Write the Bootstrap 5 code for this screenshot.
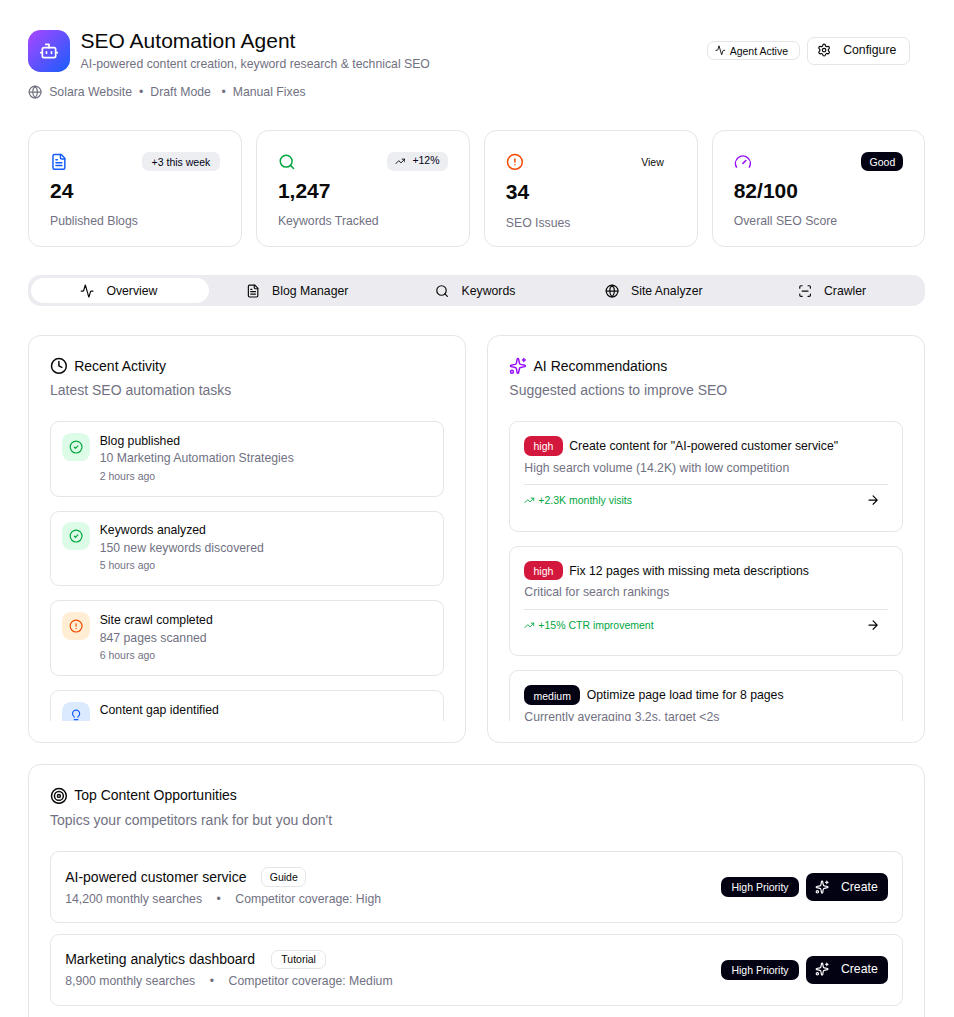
<!DOCTYPE html>
<html lang="en">
<head>
<meta charset="utf-8">
<meta name="viewport" content="width=device-width, initial-scale=1">
<title>SEO Automation Agent</title>
<link href="https://cdn.jsdelivr.net/npm/bootstrap@5.3.0/dist/css/bootstrap.min.css" rel="stylesheet">
<style>
:root{--ink:#0a0a0a;--dim:#717182;--line:#e5e5e5;--navy:#030213}
body{font-family:"Liberation Sans",Arial,sans-serif;font-size:12.26px;line-height:18px;color:var(--ink);background:#fff;overflow:hidden;height:1017px}
.page{padding:29.5px 28.6px 0 28px;height:1017px;overflow:hidden}
svg.ic{display:block;flex:none;width:14.2px;height:14.2px;fill:none;stroke:currentColor;stroke-width:2;stroke-linecap:round;stroke-linejoin:round}
svg.ic-lg{width:17.8px;height:17.8px}
svg.ic-sm{width:10.7px;height:10.7px}
.dim{color:var(--dim)}
.blue{color:#155dfc}.green{color:#00a63e}.orange{color:#f54900}.purple{color:#9810fa}

.logo{width:42px;height:42px;border-radius:12.5px;background:linear-gradient(135deg,#ad46ff,#155dfc);color:#fff}
.logo .ic{width:20px;height:20px}
.app-name{margin-left:10.6px}
.app-title{font-size:21px;line-height:24px;font-weight:400;margin:-.8px 0 0}
.tagline{margin-top:1.8px}
.site-line{height:18px;margin-top:10.2px}
.s1{margin-left:7px}.s2{margin-left:7px}.s3{margin-left:7px}.s4{margin-left:10.5px}.s5{margin-left:7px}
.head-tools{height:42px;gap:7px;margin-right:15.4px}
.status{width:93px;padding-right:4px}
.btn-conf{width:103px;height:28px;border:1px solid var(--line);border-radius:7px;font-size:12.26px;line-height:18px;padding:0 0 0 9px;color:var(--ink)}
.conf-t{margin-left:12px;padding-bottom:1px}

.panel{border:1px solid var(--line);border-radius:12.5px;background:#fff}
.tag{display:inline-flex;align-items:center;justify-content:center;height:19.6px;border-radius:7px;font-size:10.5px;line-height:14px;white-space:nowrap;border:1px solid transparent}
.tag-soft{background:#eceef2;color:var(--navy)}
.tag-line{border-color:var(--line)}
.tag-dark{background:var(--navy);color:#fff}
.tag-red{background:#d4183d;color:#fff}

.stats{display:grid;grid-template-columns:repeat(4,1fr);gap:14.2px;margin-top:28.9px}
.stat{height:117.4px;padding:21px 21px 0 21px}
.stat-top{height:20px}
.stat-tall{height:21.3px}
.stat-num{font-size:21px;line-height:28px;font-weight:700;margin-top:5.6px}
.stat-label{margin-top:7.1px}

.tabs{display:grid;grid-template-columns:repeat(5,1fr);height:31.2px;margin-top:28.2px;padding:3px;border-radius:12.5px;background:#ececf0}
.tab-item{border-radius:12.5px;gap:12px;padding-right:2.6px;color:var(--ink);text-decoration:none}
.tab-item.active{background:#fff}

.duo{display:grid;grid-template-columns:1fr 1fr;gap:21.3px;margin-top:28.4px}
.section-card{padding:21px}
.duo .section-card{height:408.4px}
.sec-title{font-size:14px;line-height:18px;gap:6.4px;margin:0;font-weight:400}
.sec-sub{font-size:14px;line-height:20px;margin-top:5.2px}
.scroller{height:299.6px;overflow:hidden;margin-top:21px}
.entry{border:1px solid var(--line);border-radius:8.9px}
.act{height:75.6px;margin-bottom:14.1px;padding:10.7px;gap:10px}
.tile{width:28px;height:28px;border-radius:8.9px}
.t-green{background:#dcfce7}.t-orange{background:#ffedd4}.t-blue{background:#dbeafe}
.act-t{line-height:17.6px}
.act-s{line-height:17.6px}
.act-w{font-size:10.5px;line-height:16px}
.rec{height:110.6px;margin-bottom:14.1px;padding:14.2px 14px 0}
.rec-head{gap:6.7px;height:19.6px}
.rec-head .tag{padding:1px 8.2px 0}
.rec-name{padding-top:.8px}
.rec-desc{margin-top:2.8px;line-height:18px}
.rec-foot{border-top:1px solid var(--line);margin-top:7.5px;padding-top:7.3px;font-size:10.5px;line-height:16px}
.rec-foot .trend{margin-right:3.3px}
.rec-foot .arrow{margin-right:8.7px}

.third{margin-top:21.3px;height:400px}
.opps{margin-top:21.3px}
.opp{height:72px;margin-bottom:10.7px;padding:14.8px 14.2px 14px}
.opp-name{font-size:14px;line-height:20px;height:20px}
.opp-meta{gap:14.5px;margin-top:3px}
.opp-side{gap:7.2px;height:41px}
.btn-create{width:82px;height:28.4px;background:var(--navy);color:#fff;border-radius:7px;border:0;font-size:12.26px;line-height:18px;padding:0 10.5px 1px 8.5px}
</style>
</head>
<body>
<svg width="0" height="0" class="position-absolute" aria-hidden="true">
<symbol id="bot" viewBox="0 0 24 24"><path d="M12 8V4H8"/><rect width="16" height="12" x="4" y="8" rx="2"/><path d="M2 14h2M20 14h2M15 13v2M9 13v2"/></symbol>
<symbol id="globe" viewBox="0 0 24 24"><circle cx="12" cy="12" r="10"/><path d="M12 2a14.5 14.5 0 0 0 0 20 14.5 14.5 0 0 0 0-20M2 12h20"/></symbol>
<symbol id="activity" viewBox="0 0 24 24"><path d="M22 12h-2.48a2 2 0 0 0-1.93 1.46l-2.35 8.36a.25.25 0 0 1-.48 0L9.24 2.18a.25.25 0 0 0-.48 0l-2.35 8.36A2 2 0 0 1 4.49 12H2"/></symbol>
<symbol id="settings" viewBox="0 0 24 24"><path d="M9.671 4.136a2.34 2.34 0 0 1 4.659 0 2.34 2.34 0 0 0 3.319 1.915 2.34 2.34 0 0 1 2.33 4.033 2.34 2.34 0 0 0 0 3.831 2.34 2.34 0 0 1-2.33 4.033 2.34 2.34 0 0 0-3.319 1.915 2.34 2.34 0 0 1-4.659 0 2.34 2.34 0 0 0-3.32-1.915 2.34 2.34 0 0 1-2.33-4.033 2.34 2.34 0 0 0 0-3.831A2.34 2.34 0 0 1 6.35 6.051a2.34 2.34 0 0 0 3.319-1.915"/><circle cx="12" cy="12" r="3"/></symbol>
<symbol id="file" viewBox="0 0 24 24"><path d="M15 2H6a2 2 0 0 0-2 2v16a2 2 0 0 0 2 2h12a2 2 0 0 0 2-2V7Z"/><path d="M14 2v4a2 2 0 0 0 2 2h4M10 9H8M16 13H8M16 17H8"/></symbol>
<symbol id="search" viewBox="0 0 24 24"><circle cx="11" cy="11" r="8"/><path d="m21 21-4.3-4.3"/></symbol>
<symbol id="alert" viewBox="0 0 24 24"><circle cx="12" cy="12" r="10"/><path d="M12 8v4M12 16h.01"/></symbol>
<symbol id="gauge" viewBox="0 0 24 24"><path d="m12 14 4-4M3.34 19a10 10 0 1 1 17.32 0"/></symbol>
<symbol id="trend" viewBox="0 0 24 24"><path d="M16 7h6v6"/><path d="m22 7-8.5 8.5-5-5L2 17"/></symbol>
<symbol id="scan" viewBox="0 0 24 24"><path d="M3 7V5a2 2 0 0 1 2-2h2M17 3h2a2 2 0 0 1 2 2v2M21 17v2a2 2 0 0 1-2 2h-2M7 21H5a2 2 0 0 1-2-2v-2M7 12h10"/></symbol>
<symbol id="clock" viewBox="0 0 24 24"><circle cx="12" cy="12" r="10"/><path d="M12 6v6l4 2"/></symbol>
<symbol id="sparkles" viewBox="0 0 24 24"><path d="M11.017 2.814a1 1 0 0 1 1.966 0l1.051 5.558a2 2 0 0 0 1.594 1.594l5.558 1.051a1 1 0 0 1 0 1.966l-5.558 1.051a2 2 0 0 0-1.594 1.594l-1.051 5.558a1 1 0 0 1-1.966 0l-1.051-5.558a2 2 0 0 0-1.594-1.594l-5.558-1.051a1 1 0 0 1 0-1.966l5.558-1.051a2 2 0 0 0 1.594-1.594zM20 2v4M22 4h-4"/><circle cx="4" cy="20" r="2"/></symbol>
<symbol id="check" viewBox="0 0 24 24"><circle cx="12" cy="12" r="10"/><path d="m9 12 2 2 4-4"/></symbol>
<symbol id="bulb" viewBox="0 0 24 24"><path d="M15 14c.2-1 .7-1.7 1.5-2.5 1-.9 1.5-2.2 1.5-3.5A6 6 0 0 0 6 8c0 1 .2 2.2 1.5 3.5.7.7 1.3 1.5 1.5 2.5M9 18h6M10 22h4"/></symbol>
<symbol id="target" viewBox="0 0 24 24"><circle cx="12" cy="12" r="10"/><circle cx="12" cy="12" r="6"/><circle cx="12" cy="12" r="2"/></symbol>
<symbol id="arrow" viewBox="0 0 24 24"><path d="M5 12h14M12 5l7 7-7 7"/></symbol>
</svg>

<main class="page">
  <header class="d-flex justify-content-between">
    <div>
      <div class="d-flex">
        <div class="logo d-flex align-items-center justify-content-center"><svg class="ic"><use href="#bot"/></svg></div>
        <div class="app-name">
          <h1 class="app-title">SEO Automation Agent</h1>
          <div class="dim tagline">AI-powered content creation, keyword research &amp; technical SEO</div>
        </div>
      </div>
      <div class="d-flex align-items-center dim site-line">
        <svg class="ic"><use href="#globe"/></svg><span class="s1">Solara Website</span><span class="s2">•</span><span class="s3">Draft Mode</span><span class="s4">•</span><span class="s5">Manual Fixes</span>
      </div>
    </div>
    <div class="d-flex align-items-center head-tools">
      <span class="tag tag-line status"><svg class="ic ic-sm"><use href="#activity"/></svg><span class="ms-1">Agent Active</span></span>
      <button class="btn btn-conf d-flex align-items-center"><svg class="ic"><use href="#settings"/></svg><span class="conf-t">Configure</span></button>
    </div>
  </header>

  <section class="stats">
    <div class="panel stat">
      <div class="stat-top d-flex justify-content-between align-items-center"><svg class="ic ic-lg blue"><use href="#file"/></svg><span class="tag tag-soft" style="width:77.5px">+3 this week</span></div>
      <div class="stat-num">24</div><div class="stat-label dim">Published Blogs</div>
    </div>
    <div class="panel stat">
      <div class="stat-top d-flex justify-content-between align-items-center"><svg class="ic ic-lg green"><use href="#search"/></svg><span class="tag tag-soft" style="width:61px;gap:7px"><svg class="ic ic-sm"><use href="#trend"/></svg><span class="pb-1 mb-n1" style="line-height:12px">+12%</span></span></div>
      <div class="stat-num">1,247</div><div class="stat-label dim">Keywords Tracked</div>
    </div>
    <div class="panel stat">
      <div class="stat-top stat-tall d-flex justify-content-between align-items-center"><svg class="ic ic-lg orange"><use href="#alert"/></svg><span class="tag" style="width:45px;padding-right:1px">View</span></div>
      <div class="stat-num">34</div><div class="stat-label dim">SEO Issues</div>
    </div>
    <div class="panel stat">
      <div class="stat-top d-flex justify-content-between align-items-center"><svg class="ic ic-lg purple"><use href="#gauge"/></svg><span class="tag tag-dark" style="width:42px">Good</span></div>
      <div class="stat-num">82/100</div><div class="stat-label dim">Overall SEO Score</div>
    </div>
  </section>

  <nav class="tabs">
    <a class="tab-item active d-flex align-items-center justify-content-center"><svg class="ic"><use href="#activity"/></svg>Overview</a>
    <a class="tab-item d-flex align-items-center justify-content-center"><svg class="ic"><use href="#file"/></svg>Blog Manager</a>
    <a class="tab-item d-flex align-items-center justify-content-center"><svg class="ic"><use href="#search"/></svg>Keywords</a>
    <a class="tab-item d-flex align-items-center justify-content-center"><svg class="ic"><use href="#globe"/></svg>Site Analyzer</a>
    <a class="tab-item d-flex align-items-center justify-content-center"><svg class="ic"><use href="#scan"/></svg>Crawler</a>
  </nav>

  <div class="duo">
    <section class="panel section-card">
      <h2 class="sec-title d-flex align-items-center"><svg class="ic ic-lg"><use href="#clock"/></svg>Recent Activity</h2>
      <div class="sec-sub dim">Latest SEO automation tasks</div>
      <div class="scroller">
        <div class="entry act d-flex"><div class="tile t-green d-flex align-items-center justify-content-center"><svg class="ic green"><use href="#check"/></svg></div><div><div class="act-t">Blog published</div><div class="act-s dim">10 Marketing Automation Strategies</div><div class="act-w dim">2 hours ago</div></div></div>
        <div class="entry act d-flex"><div class="tile t-green d-flex align-items-center justify-content-center"><svg class="ic green"><use href="#check"/></svg></div><div><div class="act-t">Keywords analyzed</div><div class="act-s dim">150 new keywords discovered</div><div class="act-w dim">5 hours ago</div></div></div>
        <div class="entry act d-flex"><div class="tile t-orange d-flex align-items-center justify-content-center"><svg class="ic orange"><use href="#alert"/></svg></div><div><div class="act-t">Site crawl completed</div><div class="act-s dim">847 pages scanned</div><div class="act-w dim">6 hours ago</div></div></div>
        <div class="entry act d-flex"><div class="tile t-blue d-flex align-items-center justify-content-center"><svg class="ic blue"><use href="#bulb"/></svg></div><div><div class="act-t">Content gap identified</div></div></div>
      </div>
    </section>
    <section class="panel section-card">
      <h2 class="sec-title d-flex align-items-center"><svg class="ic ic-lg purple"><use href="#sparkles"/></svg>AI Recommendations</h2>
      <div class="sec-sub dim">Suggested actions to improve SEO</div>
      <div class="scroller">
        <div class="entry rec"><div class="rec-head d-flex"><span class="tag tag-red">high</span><span class="rec-name">Create content for "AI-powered customer service"</span></div><div class="rec-desc dim">High search volume (14.2K) with low competition</div><div class="rec-foot d-flex align-items-center green"><svg class="ic ic-sm trend"><use href="#trend"/></svg>+2.3K monthly visits<svg class="ic arrow ms-auto text-black"><use href="#arrow"/></svg></div></div>
        <div class="entry rec"><div class="rec-head d-flex"><span class="tag tag-red">high</span><span class="rec-name">Fix 12 pages with missing meta descriptions</span></div><div class="rec-desc dim">Critical for search rankings</div><div class="rec-foot d-flex align-items-center green"><svg class="ic ic-sm trend"><use href="#trend"/></svg>+15% CTR improvement<svg class="ic arrow ms-auto text-black"><use href="#arrow"/></svg></div></div>
        <div class="entry rec"><div class="rec-head d-flex"><span class="tag tag-dark">medium</span><span class="rec-name">Optimize page load time for 8 pages</span></div><div class="rec-desc dim">Currently averaging 3.2s, target &lt;2s</div></div>
      </div>
    </section>
  </div>

  <section class="panel section-card third">
    <h2 class="sec-title d-flex align-items-center"><svg class="ic ic-lg"><use href="#target"/></svg>Top Content Opportunities</h2>
    <div class="sec-sub dim">Topics your competitors rank for but you don't</div>
    <div class="opps">
      <div class="entry opp d-flex justify-content-between">
        <div><div class="opp-name d-flex align-items-center">AI-powered customer service<span class="tag tag-line" style="width:45px;margin-left:14.8px">Guide</span></div><div class="opp-meta d-flex dim"><span>14,200 monthly searches</span><span>•</span><span>Competitor coverage: High</span></div></div>
        <div class="d-flex align-items-center opp-side"><span class="tag tag-dark" style="width:78px">High Priority</span><button class="btn btn-create d-flex align-items-center justify-content-between"><svg class="ic"><use href="#sparkles"/></svg>Create</button></div>
      </div>
      <div class="entry opp d-flex justify-content-between">
        <div><div class="opp-name d-flex align-items-center">Marketing analytics dashboard<span class="tag tag-line" style="width:54.5px;margin-left:16.3px">Tutorial</span></div><div class="opp-meta d-flex dim"><span>8,900 monthly searches</span><span>•</span><span>Competitor coverage: Medium</span></div></div>
        <div class="d-flex align-items-center opp-side"><span class="tag tag-dark" style="width:78px">High Priority</span><button class="btn btn-create d-flex align-items-center justify-content-between"><svg class="ic"><use href="#sparkles"/></svg>Create</button></div>
      </div>
    </div>
  </section>
</main>
<script src="https://cdn.jsdelivr.net/npm/bootstrap@5.3.0/dist/js/bootstrap.bundle.min.js"></script>
</body>
</html>
